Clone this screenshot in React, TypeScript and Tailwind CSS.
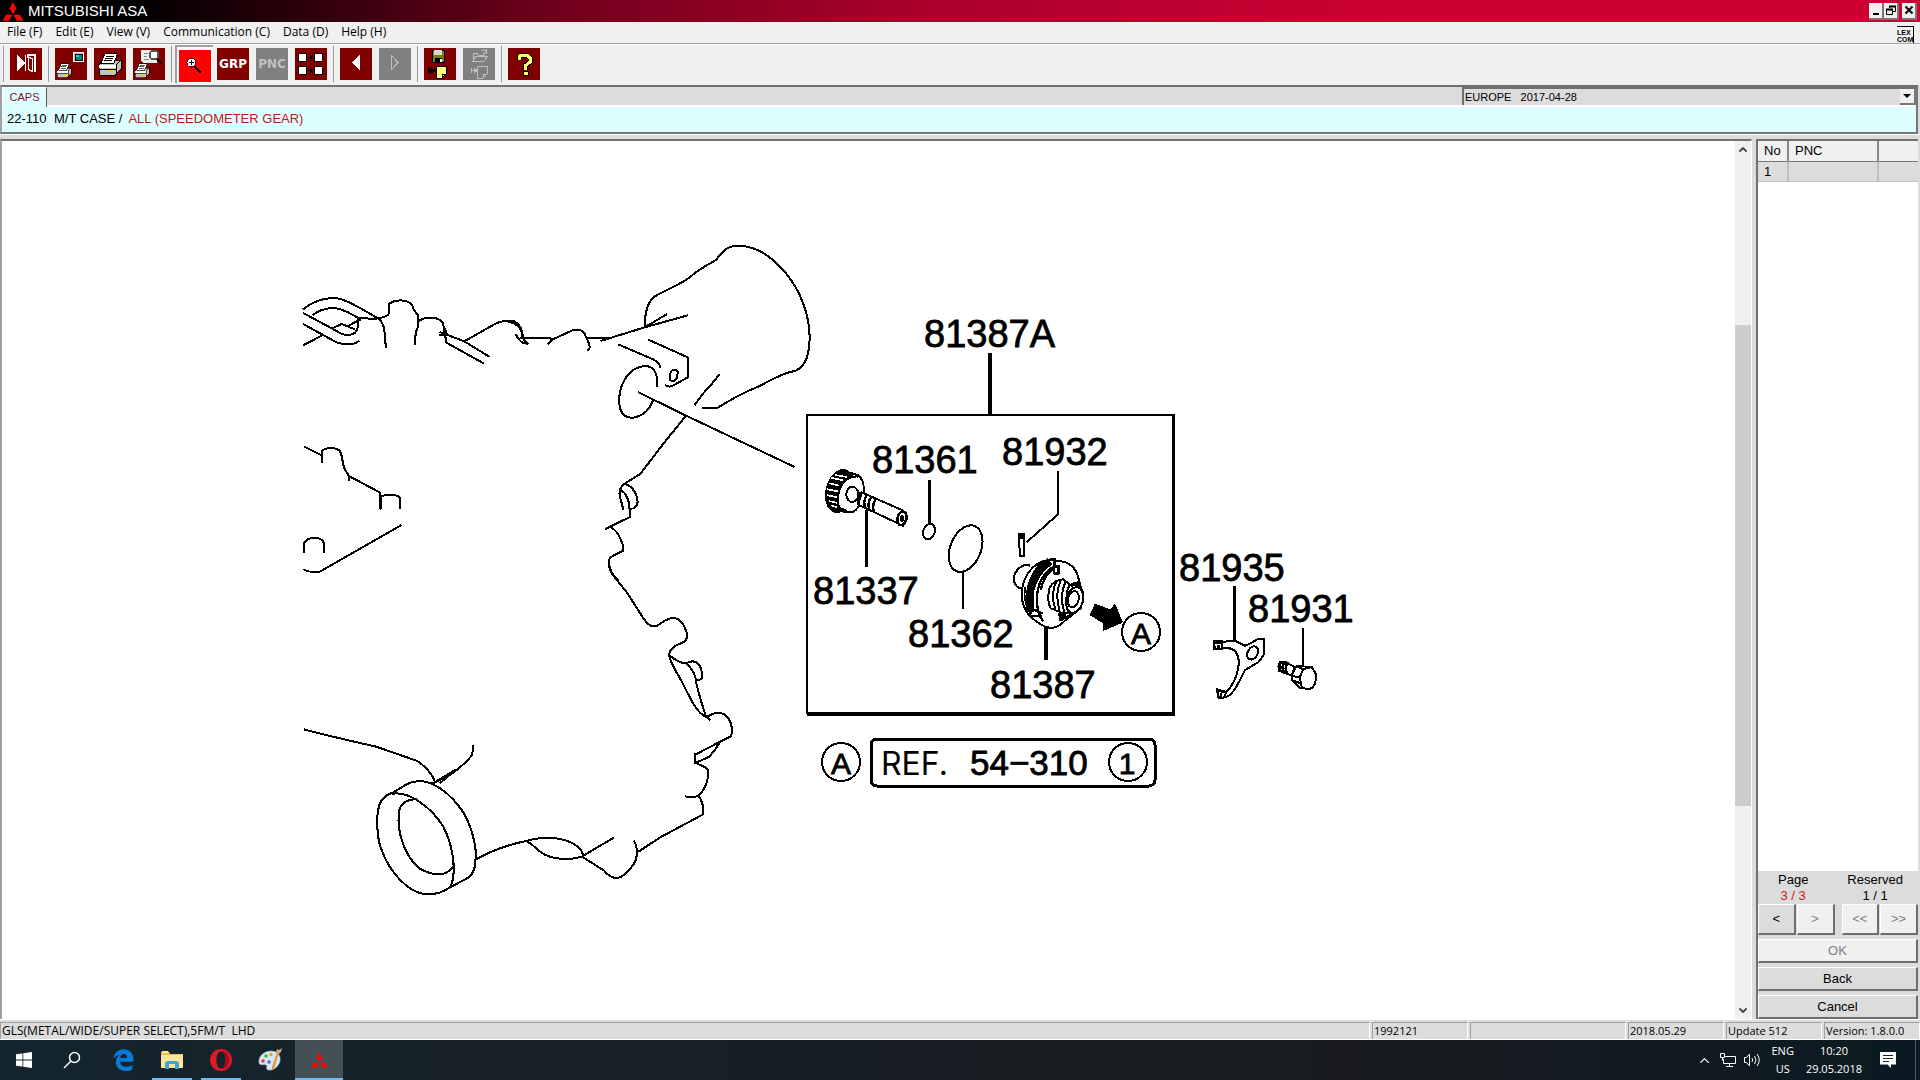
import React from "react";
import { ChevronDown, ChevronUp } from "lucide-react";

const menus = ["File (F)", "Edit (E)", "View (V)", "Communication (C)", "Data (D)", "Help (H)"];

const labels = [
  { text: "81387A", x: 924, y: 347 },
  { text: "81361", x: 872, y: 473 },
  { text: "81932", x: 1002, y: 465 },
  { text: "81337", x: 813, y: 604 },
  { text: "81362", x: 908, y: 647 },
  { text: "81387", x: 990, y: 698 },
  { text: "81935", x: 1179, y: 581 },
  { text: "81931", x: 1248, y: 622 },
];

const Mitsubishi = ({ className }: { className: string }) => (
  <svg viewBox="0 0 22 20" className={className} fill="#f40808">
    <path d="M11 0l3.6 6.6L11 13.2 7.400 6.600z" />
    <path d="M10.600 13.400L7 19.800H0l3.600-6.400z" />
    <path d="M11.400 13.400l3.600 6.400h7l-3.600-6.400z" />
  </svg>
);

const Printer = ({ transform }: { transform?: string }) => (
  <g transform={transform}>
    <path d="M4 14l5-4h17v9l-6 6H4z" fill="#c4c4bc" stroke="#000" />
    <path d="M10 3h13l-4 10H6z" fill="#fff" stroke="#000" />
    <path d="M11 6h8M10 8h8M9 10h8" stroke="#000" />
    <path d="M4 15h17v3H4z" fill="#fff" />
    <path d="M4 19h17M21 15v10M21 15l5-5" stroke="#000" />
    <path d="M14 21h5" stroke="#e8e000" strokeWidth="2" />
  </g>
);

type ToolProps = { label: string; bg?: string; disabled?: boolean; children: React.ReactNode };

const Tool = ({ label, bg = "bg-[#800000]", disabled, children }: ToolProps) => (
  <button aria-label={label} disabled={disabled} className={`h-8 w-8 shrink-0 ${bg}`}>
    <svg viewBox="0 0 32 32" className="h-8 w-8" fill="none" shapeRendering="crispEdges">
      {children}
    </svg>
  </button>
);

const Group = ({ children }: { children: React.ReactNode }) => (
  <div className="flex items-center gap-[7px] border-r border-[#9a9a9a] px-[6px]">{children}</div>
);

const Toolbar = () => (
  <div className="flex h-[41px] border-t border-white bg-[#f0f0f0] pb-[3px] pl-[3px] pt-px">
    <div className="w-px bg-[#a0a0a0]" />
    <Group>
      <Tool label="Exit">
        <path d="M7 7l8 8-8 8z" fill="#fff" />
        <path d="M15.500 7v16" stroke="#fff" />
        <path d="M17 6h9v2h-9zM24 6h2v18h-2zM17 6h2v4h-2z" fill="#fff" />
        <path d="M18.500 9.500l4 1v13l-4-2z" fill="#800000" stroke="#fff" />
      </Tool>
    </Group>
    <Group>
      <Tool label="Print screen">
        <Printer transform="translate(0 14) scale(.62)" />
        <path d="M18.500 4.500h10v9h-10z" fill="#c0c0c0" stroke="#fff" />
        <path d="M20 6h7v6h-7z" fill="#008080" stroke="#000" />
        <path d="M21 7h3v2h-3z" fill="#5cc" />
      </Tool>
      <Tool label="Print">
        <Printer transform="translate(1 2)" />
      </Tool>
      <Tool label="Print preview">
        <path d="M8 2h16v13H10l-2-2z" fill="#eee" />
        <path d="M11 5h4M11 8h3M11 11h5" stroke="#888" />
        <circle cx="21" cy="7" r="4.500" fill="#fff" stroke="#555" strokeWidth="2" />
        <path d="M24 11l5 5" stroke="#000" strokeWidth="2" />
        <Printer transform="translate(0 14) scale(.62)" />
      </Tool>
    </Group>
    <div className="flex items-center gap-[7px] border-r border-[#9a9a9a] pl-[3px] pr-[6px]">
      <button
        aria-label="Zoom"
        className="-mr-[3px] h-[38px] w-[38px] border-l-2 border-t-2 border-[#a0a0a0] bg-[#fafafa] pl-[2px] pt-[2px]"
      >
        <svg viewBox="0 0 32 32" className="h-8 w-8 bg-[#ff0000]" fill="none" shapeRendering="crispEdges">
          <path d="M15 16l7 7" stroke="#000" strokeWidth="2" />
          <circle cx="12.500" cy="12.500" r="4.500" fill="#fff" stroke="#400" />
          <path d="M10 12.500h5M12.500 10v5" stroke="#000" />
        </svg>
      </button>
      <button className="h-8 w-8 bg-[#800000] font-['DejaVu_Sans',sans-serif] text-[12px] font-bold text-white">GRP</button>
      <button disabled className="h-8 w-8 bg-[#808080] font-['DejaVu_Sans',sans-serif] text-[12px] font-bold text-[#c0c0c0]">
        PNC
      </button>
      <Tool label="Illustration list">
        <path d="M3.500 5.500h8v8h-8zM19.500 5.500h8v8h-8zM3.500 18.500h8v8h-8zM19.500 18.500h8v8h-8z" fill="#fff" stroke="#000" />
        <path d="M13 9.500h5M13 22.500h5" stroke="#000" />
        <path d="M15 7l3 2.500-3 2.500zM15 20l3 2.500-3 2.500z" fill="#000" />
      </Tool>
    </div>
    <Group>
      <Tool label="Previous">
        <path d="M20 6v17l-8-8.500z" fill="#fff" />
      </Tool>
      <Tool label="Next" bg="bg-[#808080]" disabled>
        <path d="M12 7v15l7-7.500z" stroke="#c0c0c0" />
      </Tool>
    </Group>
    <Group>
      <Tool label="Save selection">
        <path d="M8 2h12v12H8z" fill="#808000" stroke="#000" />
        <path d="M10 2h8v5h-8z" fill="#d8d8d8" />
        <path d="M11 10h7v4h-7z" fill="#000" />
        <path d="M16 11h2v3h-2z" fill="#fff" />
        <path d="M12 18h10v8l-4 4h-6z" fill="#ffff80" stroke="#000" />
        <path d="M18 30v-4h4" stroke="#000" />
        <path d="M5 20v5M6 22.500h5" stroke="#000" strokeWidth="2" />
        <path d="M7 19l5 3.500-5 3.500z" fill="#000" />
      </Tool>
      <Tool label="Load selection" bg="bg-[#808080]" disabled>
        <path d="M10 13V5h4l1 2h6v2M10 13l3-5h12l-4 5zM18 3c2-2 4-1 5 1M23 1v4h-3" stroke="#c0c0c0" />
        <path d="M14 18h10v8l-4 4h-6zM20 30v-4h4M8 20v5M8 22.500h5M11 20l3 2.500-3 2.500z" stroke="#c0c0c0" />
      </Tool>
    </Group>
    <div className="flex items-center pl-[6px]">
      <Tool label="Help">
        <path d="M11 12V9l2-2h6l3 3v4l-5 4v4" stroke="#000" strokeWidth="5" />
        <path d="M11 12V9l2-2h6l3 3v4l-5 4v4" stroke="#ffff60" strokeWidth="3" />
        <path d="M15 23h5v4h-5z" fill="#ffff60" stroke="#000" />
      </Tool>
    </div>
  </div>
);

const Casing = () => (
  <g fill="none" stroke="#000" strokeWidth="6" strokeLinejoin="round" shapeRendering="crispEdges">
    <g transform="translate(290 230) scale(.3444 .3333)">
      {/* rear extension */}
      <path d="M902 333L1030 292L1155 256M1030 292L1095 252M1030 290C1030 250 1037 218 1058 200C1090 180 1130 165 1160 143C1180 122 1215 103 1237 90C1262 55 1275 47 1303 47C1370 50 1410 95 1440 130C1485 185 1509 260 1509 325C1507 390 1490 418 1458 425C1430 429 1390 455 1355 472C1310 490 1270 515 1239 535H1197" />
      <path d="M1248 432L1222 465L1200 490L1175 525" />
      <path d="M953 343L1045 384Q1075 395 1075 414M1040 329L1155 382V442L1110 468Q1096 473 1089 464" />
      <path d="M1108 422l14-3 4 8-3 18-9 8-12-2 2-20z" />
      <path d="M1067 470C1068 425 1055 408 1030 408C985 412 955 460 956 515C956 560 985 568 1005 561C1030 555 1045 535 1054 512" />
      <path d="M1010 486L1150 557L1465 711M1150 557L1085 640L1017 732L970 762" />
      {/* upper flange */}
      <path d="M38 238Q80 203 130 204C160 206 185 225 210 238L255 265C270 275 276 290 278 355M38 249L105 286L150 312Q192 323 197 290V268M65 256Q90 235 125 234C160 236 180 255 200 265L250 266Q285 262 288 248V222Q298 212 322 211Q355 212 359 238L371 255L373 290Q363 300 363 344" />
      <path d="M38 282L135 337Q175 352 202 332M38 346L92 317M120 296L150 282L188 298M165 290L205 268" />
      <path d="M371 275Q385 263 410 263Q445 265 446 290L454 338L564 401M434 306L506 334L580 381M506 334L590 285Q615 270 635 275C665 282 675 300 675 325M432 316h18M446 290l10 22" />
      <path d="M615 272L648 272Q678 288 676 325L690 341Q668 342 655 312M668 324H755Q765 332 748 342M755 332L820 301Q855 295 858 318Q880 360 862 360M862 323H935" />
      {/* left bosses */}
      <path d="M40 649L93 677M93 698V664Q100 654 122 654Q150 655 150 680L157 714L171 738V754M171 738L260 787L263 837V800Q275 794 292 794Q319 796 319 806V837M42 968V938Q52 923 72 923Q99 926 99 945V969M40 1017Q45 1027 85 1026L180 970L324 885" />
      {/* right edge */}
      <path d="M970 762Q950 780 960 808L968 840M970 762C1000 768 1013 805 1008 825Q1000 838 987 836M960 780C980 790 988 820 986 862L955 877L915 898M932 892C955 905 970 945 967 962L930 982C920 1000 930 1030 953 1052" />
    </g>
    <g transform="translate(290 560) scale(.3444 .3333)">
      <path d="M926 0Q924 30 940 48L980 100L1020 165C1040 200 1055 205 1070 195Q1090 178 1110 174Q1140 172 1154 225Q1154 243 1135 250Q1105 260 1100 285M1100 285Q1108 315 1130 350L1170 430Q1190 465 1215 475L1220 480M1100 285Q1130 310 1150 310Q1178 335 1180 370Q1190 415 1208 470M1150 310Q1175 295 1190 318Q1200 340 1195 357L1180 362" />
      <path d="M1208 472Q1230 458 1247 458Q1278 465 1282 500Q1285 525 1278 530L1249 545L1177 584M1177 578V609L1218 590L1235 568L1249 545M1177 609Q1212 622 1215 632Q1215 675 1190 704Q1170 718 1147 709M1185 706Q1203 730 1200 763L1115 810L1075 832L1012 875" />
      {/* bottom flange */}
      <path d="M998 843C1012 860 1008 900 998 912Q970 955 948 954Q930 954 912 932L848 890C800 905 745 895 720 870Q705 855 690 845M541 898Q600 862 685 843C720 832 745 833 780 836Q825 845 845 870L852 887L940 833" />
      <path d="M40 508Q120 530 250 560L370 603Q405 628 420 662M531 556Q532 580 525 590Q500 620 465 645L412 671M425 664L480 630L435 670" />
      {/* output bore */}
      <path d="M541 898C540 840 518 775 495 745Q460 695 412 671Q375 655 340 672L300 697Q262 710 257 745C250 775 253 840 266 870C290 940 345 995 385 1001Q430 1008 465 982L505 960Q540 945 538 898" />
      <path d="M295 702C350 690 415 750 445 800C480 870 482 950 465 982M368 718Q320 718 316 760C310 820 335 890 375 925Q445 965 475 918" />
    </g>
  </g>
);

const Parts = () => (
  <g fill="none" stroke="#000" strokeWidth="6" strokeLinejoin="round" shapeRendering="crispEdges">
    <g transform="translate(800 300) scale(.3333)">
      {/* frame and leaders */}
      <path d="M21 1241V345H1121" />
      <path d="M1120 342V1244" strokeWidth="9" />
      <path d="M20 1242H1124" strokeWidth="12" />
      <path d="M570 159V345" strokeWidth="12" />
      <path d="M199 630V801M389 540V675" strokeWidth="9" />
      <path d="M775 513V642L680 727M489 815V926" />
      <path d="M738 960V1080" strokeWidth="12" />
      {/* driven gear */}
      <ellipse cx="120" cy="573" rx="40" ry="64" fill="#000" transform="rotate(14 120 573)" />
      <path d="M92 533l38 8M88 550l30 7M82 568l32 6M82 586l30 6M86 603l26 6M92 616l20 6M106 525l34 6" stroke="#fff" strokeWidth="5" />
      <path d="M130 512L175 526Q196 545 190 580Q185 620 160 635Q135 640 118 625Q108 600 120 565Q140 525 175 530" fill="#fff" />
      <path d="M118 515l40 8M110 622l30 14" strokeWidth="11" />
      <path d="M185 577L310 632V678L175 614Z" fill="#fff" />
      <ellipse cx="157" cy="583" rx="18" ry="23" fill="#fff" />
      <path d="M183 577q-14 15-8 36M200 587q-12 16-4 36M213 592q-12 16-5 36M227 598q-12 16-5 38" strokeWidth="7" />
      <ellipse cx="306" cy="655" rx="13" ry="21" fill="#fff" strokeWidth="8" transform="rotate(12 306 655)" />
      <ellipse cx="306" cy="655" rx="3" ry="8" />
      {/* rings and pin */}
      <ellipse cx="387" cy="695" rx="17" ry="24" transform="rotate(20 387 695)" />
      <ellipse cx="497" cy="746" rx="46" ry="73" transform="rotate(22 497 746)" />
      <path d="M656 702h16v66h-12z" />
      <path d="M656 704h16v10h-16z" fill="#000" />
      {/* sleeve */}
      <path d="M690 797Q665 788 645 820Q636 850 655 863L668 866" />
      <path d="M745 780Q690 790 670 850Q655 910 690 948Q720 978 750 984Q775 984 795 962L842 925L850 880L838 850Q835 805 800 788Q775 780 745 780Z" fill="#fff" />
      <path d="M730 783Q680 830 681 900Q682 930 695 942" strokeWidth="7" />
      <path d="M750 784Q700 820 690 880V935" strokeWidth="23" />
      <path d="M768 795Q710 830 711 900Q711 940 730 965M775 797Q735 815 722 870M680 920l48 20M690 948h35" strokeWidth="7" />
      <path d="M675 860q-6 50 18 84" strokeWidth="5" />
      <path d="M750 778h14v20h12v22h-14v-18" strokeWidth="8" />
      <path d="M838 850L815 858L790 838Q760 840 748 865Q740 905 752 925L785 938V960L842 925" fill="#fff" />
      <path d="M770 842q-20 40-4 86M783 840q-20 44-4 92M797 844q-20 44-4 92M810 850q-20 44-4 92" />
      <ellipse cx="824" cy="900" rx="25" ry="39" fill="#fff" transform="rotate(14 824 900)" />
      <ellipse cx="820" cy="898" rx="16" ry="25" transform="rotate(14 820 898)" />
      <path d="M815 852l24 -6v14zM778 942l20 -4-6 18-12 4z" fill="#000" />
      {/* arrow */}
      <path d="M886 915L934 932L944 915L965 966L912 989L914 970L873 944Z" fill="#000" />
    </g>
    <g transform="translate(1150 530) scale(.3333)">
      <path d="M253 168V332" strokeWidth="9" />
      <path d="M459 294V405" />
      {/* fork plate */}
      <path d="M192 337L214 336L255 332L285 347L302 340L325 326H341V375L325 397L285 420C275 440 262 470 245 490Q230 505 207 504L201 479L228 487C255 460 268 420 266 390Q260 350 225 355L195 357Z" />
      <path d="M192 334h24v23h-24zM201 478l28 8-8 18h-16z" />
      <path d="M190 337h22M205 345v12M203 480l18 6M213 490v14" strokeWidth="8" />
      <ellipse cx="308" cy="369" rx="15" ry="21" transform="rotate(30 308 369)" />
      {/* bolt */}
      <path d="M390 397l22 2 22 12-8 26-38-14q-6-14 2-26z" />
      <path d="M392 398q-8 12 0 26M402 400q-8 12 0 28M411 402q-7 14 0 28M390 397h22" strokeWidth="8" />
      <path d="M440 408L485 411L498 432Q500 470 480 477L450 474L427 450L425 435Z" fill="#fff" />
      <path d="M440 408L460 418L485 411M460 418L449 442L456 474M425 438L449 442M430 452l22 8" />
    </g>
    <g strokeWidth="2">
      <circle cx="1141" cy="632" r="19" />
      <circle cx="841" cy="762" r="19" />
      <circle cx="1128" cy="762" r="19" />
      <rect x="871" y="739" width="284" height="47" rx="6" strokeWidth="3" />
    </g>
  </g>
);

const Diagram = () => (
  <svg viewBox="2 141 1733 878" className="h-full min-w-0 flex-1" role="img" aria-label="Speedometer gear">
    <Casing />
    <Parts />
    <g className="text-[38px]" stroke="#000" strokeWidth=".8">
      {labels.map((l) => (
        <text key={l.text} x={l.x} y={l.y}>
          {l.text}
        </text>
      ))}
    </g>
    <g className="text-[30px]" stroke="#000" strokeWidth=".8">
      <text x="1141" y="644" textAnchor="middle">A</text>
      <text x="841" y="774" textAnchor="middle">A</text>
      <text x="1127" y="774" textAnchor="middle">1</text>
      <text x="970" y="775" className="text-[35px]">54−310</text>
      <text x="881" y="775" stroke="none" className="font-['Inter',sans-serif] text-[32px]">REF.</text>
    </g>
  </svg>
);

const raised = "border-b-2 border-r-2 border-l border-t border-b-[#6e6e6e] border-r-[#6e6e6e] border-l-white border-t-white";

const PartsPanel = () => (
  <aside className="flex w-[162px] flex-col border-l-2 border-t-2 border-[#707070] bg-[#dcdcdc]">
    <div className="flex-1 bg-white">
      <table className="w-full table-fixed border-collapse text-left text-[13px]">
        <thead>
          <tr className="h-5 border-b border-[#777] bg-[#f0f0f0]">
            <th className="w-[30px] border-r-2 border-[#888] pl-[6px] font-normal">No</th>
            <th className="w-[90px] border-r-2 border-[#888] pl-[6px] font-normal">PNC</th>
            <th />
          </tr>
        </thead>
        <tbody>
          <tr className="h-5 border-b border-[#c0c0c0] bg-[#dcdcdc]">
            <td className="border-r-2 border-[#c0c0c0] pl-[6px]">1</td>
            <td className="border-r-2 border-[#c0c0c0]" />
            <td />
          </tr>
        </tbody>
      </table>
    </div>
    <div className="flex h-[33px] justify-between pl-5 pr-[15px] pt-px text-center text-[13px] leading-4">
      <div>
        Page
        <div className="text-[#d01818]">3 / 3</div>
      </div>
      <div>
        Reserved
        <div>1 / 1</div>
      </div>
    </div>
    <div className="flex h-[31px] gap-px text-[13px] text-[#808080]">
      <button className={`flex-1 bg-[#dcdcdc] text-black ${raised}`}>&lt;</button>
      <button disabled className={`flex-1 bg-[#f0f0f0] ${raised}`}>&gt;</button>
      <button disabled className={`ml-[6px] flex-1 bg-[#f0f0f0] ${raised}`}>&lt;&lt;</button>
      <button disabled className={`flex-1 bg-[#f0f0f0] ${raised}`}>&gt;&gt;</button>
    </div>
    <div className="mt-1 flex flex-col gap-1 text-[13px]">
      <button disabled className={`h-6 bg-[#f0f0f0] text-[#808080] ${raised}`}>OK</button>
      <button className={`h-6 bg-[#dcdcdc] ${raised}`}>Back</button>
      <button className={`h-6 bg-[#dcdcdc] ${raised}`}>Cancel</button>
    </div>
  </aside>
);

const status = ["1992121", "", "2018.05.29", "Update 512", "Version: 1.8.0.0"];

const statusCell = "truncate border-l border-r border-t border-l-[#a0a0a0] border-r-white border-t-[#a0a0a0] pl-px";

const StatusBar = () => (
  <div className="grid h-[18px] grid-cols-[1fr_96px_156px_96px_96px_96px] gap-[2px] border-b border-white bg-[#dcdcdc] font-['Open_Sans',sans-serif] text-[11px] leading-4">
    <div className={`text-[12px] ${statusCell}`}>GLS(METAL/WIDE/SUPER SELECT),5FM/T&nbsp;&nbsp;LHD</div>
    {status.map((s, i) => (
      <div key={i} className={statusCell}>
        {s}
      </div>
    ))}
  </div>
);

const Taskbar = () => (
  <div className="flex h-10 items-stretch bg-linear-to-r from-[#14252d] via-[#191b1f] via-70% to-[#0a1a22] text-white">
    <button aria-label="Start" className="flex w-12 items-center justify-center">
      <svg viewBox="0 0 16 16" className="h-4 w-4" fill="#fff">
        <path d="M0 2.300l6.500-.9v6.200H0zM7.300 1.300L16 0v7.600H7.300zM0 8.400h6.500v6.200L0 13.700zM7.300 8.400H16V16l-8.700-1.300z" />
      </svg>
    </button>
    <button aria-label="Search" className="mr-[3px] flex w-12 items-center justify-center">
      <svg viewBox="0 0 18 18" className="h-[18px] w-[18px]" fill="none" stroke="#fff" strokeWidth="1.500">
        <circle cx="11.500" cy="6.500" r="5" />
        <path d="M8 10l-7 7" />
      </svg>
    </button>
    <div className="flex gap-px">
      <button aria-label="Edge" className="flex w-12 items-center justify-center">
        <svg viewBox="0 0 21 22" className="h-[22px] w-[21px]" fill="#0a7ad8">
          <path d="M.5 9.800C1.300 4 5 .3 10.800.3c6 0 9.600 4.200 9.600 10v2.400H7c.3 3.600 3.300 5 6.600 5 2.200 0 4.100-.6 5.700-1.600v4.300c-1.900 1-4.100 1.500-6.500 1.500-6.200 0-10-3.300-10-8.800 0-3.300 1.700-5.800 4.500-7.400C4 6.200 2 7.400.5 9.800zM7.200 9H14c0-2.400-1-3.900-3.200-3.900C8.700 5.100 7.500 6.800 7.200 9z" />
        </svg>
      </button>
      <button aria-label="File Explorer" className="relative flex w-12 items-center justify-center">
        <svg viewBox="0 0 22 20" className="h-5 w-[22px]">
          <path d="M0 2h8l1 2h13v14H0z" fill="#f0c04c" />
          <path d="M1 1h6l1 2H1z" fill="#fbe9a0" />
          <path d="M0 5h22v13H0z" fill="#fbe398" />
          <path d="M4 19v-6l2-2h10l2 2v6h-4v-5H8v5z" fill="#3aa6d8" />
        </svg>
        <span className="absolute inset-x-1 bottom-0 h-[2px] bg-[#76b9ed]" />
      </button>
      <button aria-label="Opera" className="relative flex w-12 items-center justify-center">
        <svg viewBox="0 0 22 22" className="h-[22px] w-[22px]">
          <path fillRule="evenodd" d="M11 0a11 11 0 1 0 0 22a11 11 0 1 0 0-22zM11 2.500c2.800 0 4.600 3.500 4.600 8.500s-1.800 8.500-4.600 8.500S6.400 16 6.400 11 8.200 2.500 11 2.500z" fill="#e01828" />
          <path d="M11 2.500c5-1.500 8 3 8 8.500s-3 10-8 8.500c2.800 0 4.600-3.500 4.600-8.500S13.800 2.500 11 2.500z" fill="#a80818" />
        </svg>
        <span className="absolute inset-x-1 bottom-0 h-[2px] bg-[#76b9ed]" />
      </button>
      <button aria-label="Paint" className="flex w-12 items-center justify-center">
        <svg viewBox="0 0 25 24" className="h-6 w-[25px]">
          <path d="M1 15C0 8 6 3 13 3s10 5 9 10-6 10-12 9c-3-1 0-4-2-5s-6 1-7-2z" fill="#d8e8f2" stroke="#88a8bc" strokeWidth=".6" />
          <circle cx="5" cy="13" r="1.800" fill="#d83838" />
          <circle cx="8" cy="8" r="1.800" fill="#48b040" />
          <circle cx="13" cy="6.500" r="1.800" fill="#e8a030" />
          <circle cx="11" cy="14" r="1.800" fill="#3878d8" />
          <path d="M21 5l-5 16-2 1 0-3 5-15z" fill="#e09838" />
          <path d="M18 4l1-3 2 1 3-2-1 4-2 2z" fill="#c8a878" />
        </svg>
      </button>
      <button aria-label="Mitsubishi ASA" className="relative flex w-12 items-center justify-center bg-[#444f56]">
        <Mitsubishi className="h-4 w-[17px]" />
        <span className="absolute inset-x-0 bottom-0 h-[2px] bg-[#76b9ed]" />
      </button>
    </div>
    <div className="ml-auto flex items-center text-center font-['Open_Sans',sans-serif] text-[11px] leading-[18px]">
      <ChevronUp className="mr-2 h-[15px] w-[15px]" strokeWidth={2} />
      <svg viewBox="0 0 16 14" className="mr-2 h-[14px] w-4" fill="none" stroke="#fff">
        <path d="M5 3.500h10.500v7H3.500V6M9.500 10.500v3M6 13.500h7M.5.5h4v4h-4zM2.500 4.500v3" />
      </svg>
      <svg viewBox="0 0 17 14" className="mr-[10px] h-[14px] w-[17px]" fill="none" stroke="#fff">
        <path d="M.5 4.500h2l3-3.500v12l-3-3.500h-2zM8 5q1.500 2 0 4M10.500 3q3 4 0 8M13 1q4.500 6 0 12" />
      </svg>
      <div className="mr-3">
        <div>ENG</div>
        <div>US</div>
      </div>
      <div className="mr-[18px]">
        <div>10:20</div>
        <div>29.05.2018</div>
      </div>
      <svg viewBox="0 0 16 16" className="mr-[19px] h-4 w-4">
        <path d="M0 0h16v12.500h-5V16l-3.500-3.500H0z" fill="#fff" />
        <path d="M3 3.500h10M3 6.500h10M3 9.500h6" stroke="#14202a" />
      </svg>
      <div className="mr-1 h-10 w-px bg-[#4a565c]" />
    </div>
  </div>
);

const winButton = "flex h-[17px] w-[15px] items-center justify-center border-b-2 border-r-2 border-[#777] bg-[#f0f0f0]";

const App = () => {
  return (
    <div className="flex h-screen flex-col overflow-hidden bg-[#dcdcdc] font-['Liberation_Sans',sans-serif] text-black">
      <header className="flex h-[22px] shrink-0 items-center bg-[linear-gradient(90deg,#000_7%,#75001c_30%,#a80029_47%,#cc0033_72%)] pl-[2px] pr-[3px]">
        <Mitsubishi className="h-[19px] w-[22px]" />
        <h1 className="ml-1 text-[15px] leading-5 text-white">MITSUBISHI ASA</h1>
        <div className="ml-auto flex">
          <button aria-label="Minimize" className={winButton}>
            <svg viewBox="0 0 10 10" className="h-[10px] w-[10px]"><path d="M2 8h6v2H2z" /></svg>
          </button>
          <button aria-label="Restore" className={winButton}>
            <svg viewBox="0 0 10 10" className="h-[10px] w-[10px]" fill="none" stroke="#000">
              <path d="M3.500 3V1.500h6v5H7M.5 4.500h6v5h-6z" />
              <path d="M3 1.500h7M0 4.500h7" strokeWidth="2" />
            </svg>
          </button>
          <button aria-label="Close" className={`ml-[3px] ${winButton}`}>
            <svg viewBox="0 0 10 10" className="h-[10px] w-[10px]" stroke="#000" strokeWidth="2"><path d="M1.500 1.500l7 7M8.500 1.500l-7 7" /></svg>
          </button>
        </div>
      </header>
      <nav className="flex h-[22px] shrink-0 items-center gap-[13px] border-b border-[#a0a0a0] bg-[#f0f0f0] pb-[2px] pl-[7px] pr-[6px] font-['Open_Sans',sans-serif] text-[12px] leading-[18px]">
        {menus.map((m) => (
          <button key={m}>{m}</button>
        ))}
        <div className="ml-auto mt-[5px] h-[17px] w-[17px] border-r border-t border-black pt-[2px] font-['Liberation_Sans',sans-serif] text-[7px] font-bold leading-[7px]">
          <div>LEX</div>
          <div>COM</div>
        </div>
      </nav>
      <Toolbar />
      <section className="mr-[2px] h-[49px] shrink-0 border-2 border-b-[#777] border-l-[#a0a0a0] border-r-[#777] border-t-[#707070]">
        <div className="flex h-5">
          <button className="w-[45px] border-l border-r border-t border-l-white border-r-[#555] border-t-white bg-[#ddffff] text-[11px] text-[#8c1030]">
            CAPS
          </button>
          <div className="flex flex-1 justify-end border-b-2 border-white">
            <div className="relative flex w-[454px]">
              <select
                aria-label="Catalogue"
                className="h-[18px] w-full appearance-none border-l-2 border-t-2 border-[#707070] bg-[#dcdcdc] pl-px text-[11px] leading-4"
              >
                <option>EUROPE&nbsp;&nbsp;&nbsp;2017-04-28</option>
              </select>
              <span className="pointer-events-none absolute bottom-0 right-0 top-[2px] flex w-4 items-center justify-center border-b-2 border-r-2 border-[#777] bg-[#f0f0f0]">
                <svg viewBox="0 0 8 4" className="h-1 w-2"><path d="M0 0h8L4 4z" /></svg>
              </span>
            </div>
          </div>
        </div>
        <div className="flex h-[25px] items-center bg-[#ddffff] pb-[2px] pl-[5px] text-[13px]">
          <span className="w-[47px]">22-110</span>
          <span>M/T CASE /</span>
          <span className="ml-[6px] text-[#c01818]">ALL (SPEEDOMETER GEAR)</span>
        </div>
      </section>
      <div className="h-[5px] shrink-0 border-t border-white" />
      <div className="flex min-h-0 flex-1 pr-[2px]">
        <main className="mr-1 flex min-w-0 flex-1 border-l-2 border-r border-t-2 border-l-[#a0a0a0] border-r-white border-t-[#707070] bg-white">
          <Diagram />
          <div className="flex w-4 flex-col items-center bg-[#f0f0f0]">
            <ChevronUp className="h-[17px] w-3 shrink-0 text-[#505050]" strokeWidth={4} />
            <div className="flex-[167]" />
            <div className="w-full flex-[482] bg-[#cdcdcd]" />
            <div className="flex-[196]" />
            <ChevronDown className="h-[17px] w-3 shrink-0 text-[#505050]" strokeWidth={4} />
          </div>
        </main>
        <PartsPanel />
      </div>
      <div className="h-[3px] shrink-0 border-t border-white" />
      <StatusBar />
      <Taskbar />
    </div>
  );
};

export default App;
